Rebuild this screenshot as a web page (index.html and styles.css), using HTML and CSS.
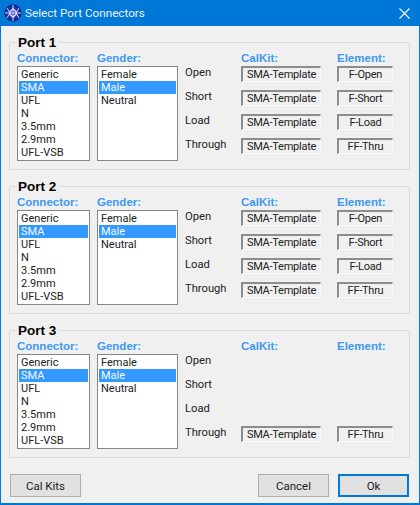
FILE: index.html
```html
<!DOCTYPE html>
<html lang="en">
<head>
<meta charset="utf-8">
<title>Select Port Connectors</title>
<link rel="stylesheet" href="styles.css">
</head>
<body>
<div class="window">
  <header class="titlebar">
    <svg class="app-icon" width="18" height="18" viewBox="0 0 18 18"><circle cx="9" cy="9" r="8" fill="#1c2fa8" stroke="#0c1a70"/><path d="M1 9h16M9 1v16M3 4l6 10 6-10M3 14l6-10 6 10" fill="none" stroke="#c9d4ff" stroke-width="1"/><circle cx="9" cy="9" r="3.5" fill="none" stroke="#e6ebff"/></svg>
    <span class="title">Select Port Connectors</span>
    <svg class="close" width="11" height="11" viewBox="0 0 11 11"><path d="M.5.5l10 10M10.5.5l-10 10" stroke="#fff" stroke-width="1.1" fill="none"/></svg>
  </header>
  <main class="content">
    <section class="group">
      <h2 class="legend">Port 1</h2>
      <div class="port">
        <div class="col-conn"><div class="hdr">Connector:</div>
          <ul class="list"><li>Generic</li><li class="sel">SMA</li><li>UFL</li><li>N</li><li>3.5mm</li><li>2.9mm</li><li>UFL-VSB</li></ul></div>
        <div class="col-gender"><div class="hdr">Gender:</div>
          <ul class="list"><li>Female</li><li class="sel">Male</li><li>Neutral</li></ul></div>
        <div class="col-table">
          <div class="hdr-row"><span class="hdr h-kit">CalKit:</span><span class="hdr">Element:</span></div>
          <div class="row"><span class="lbl">Open</span><span class="field kit">SMA-Template</span><span class="field el">F-Open</span></div>
          <div class="row"><span class="lbl">Short</span><span class="field kit">SMA-Template</span><span class="field el">F-Short</span></div>
          <div class="row"><span class="lbl">Load</span><span class="field kit">SMA-Template</span><span class="field el">F-Load</span></div>
          <div class="row"><span class="lbl">Through</span><span class="field kit">SMA-Template</span><span class="field el">FF-Thru</span></div>
        </div>
      </div>
    </section>
    <section class="group">
      <h2 class="legend">Port 2</h2>
      <div class="port">
        <div class="col-conn"><div class="hdr">Connector:</div>
          <ul class="list"><li>Generic</li><li class="sel">SMA</li><li>UFL</li><li>N</li><li>3.5mm</li><li>2.9mm</li><li>UFL-VSB</li></ul></div>
        <div class="col-gender"><div class="hdr">Gender:</div>
          <ul class="list"><li>Female</li><li class="sel">Male</li><li>Neutral</li></ul></div>
        <div class="col-table">
          <div class="hdr-row"><span class="hdr h-kit">CalKit:</span><span class="hdr">Element:</span></div>
          <div class="row"><span class="lbl">Open</span><span class="field kit">SMA-Template</span><span class="field el">F-Open</span></div>
          <div class="row"><span class="lbl">Short</span><span class="field kit">SMA-Template</span><span class="field el">F-Short</span></div>
          <div class="row"><span class="lbl">Load</span><span class="field kit">SMA-Template</span><span class="field el">F-Load</span></div>
          <div class="row"><span class="lbl">Through</span><span class="field kit">SMA-Template</span><span class="field el">FF-Thru</span></div>
        </div>
      </div>
    </section>
    <section class="group">
      <h2 class="legend">Port 3</h2>
      <div class="port">
        <div class="col-conn"><div class="hdr">Connector:</div>
          <ul class="list"><li>Generic</li><li class="sel">SMA</li><li>UFL</li><li>N</li><li>3.5mm</li><li>2.9mm</li><li>UFL-VSB</li></ul></div>
        <div class="col-gender"><div class="hdr">Gender:</div>
          <ul class="list"><li>Female</li><li class="sel">Male</li><li>Neutral</li></ul></div>
        <div class="col-table">
          <div class="hdr-row"><span class="hdr h-kit">CalKit:</span><span class="hdr">Element:</span></div>
          <div class="row"><span class="lbl">Open</span></div>
          <div class="row"><span class="lbl">Short</span></div>
          <div class="row"><span class="lbl">Load</span></div>
          <div class="row"><span class="lbl">Through</span><span class="field kit">SMA-Template</span><span class="field el">FF-Thru</span></div>
        </div>
      </div>
    </section>
    <footer class="buttons">
      <button class="btn">Cal Kits</button>
      <span class="spacer"></span>
      <button class="btn">Cancel</button>
      <button class="btn default">Ok</button>
    </footer>
  </main>
</div>
</body>
</html>
```
FILE: styles.css
```css
* { box-sizing: border-box; }
html, body { margin: 0; padding: 0; }
body { width: 420px; height: 505px; overflow: hidden; font-family: Roboto, "Liberation Sans", Arial, sans-serif; font-size: 11.2px; color: #222; }
.window { width: 420px; height: 505px; display: flex; flex-direction: column; background: #f0f0f0; border: 1px solid #0078d7; border-top: 0; border-width: 0 1px 2px 1px; }
.titlebar { height: 26px; margin: 0 -1px; background: #0078d7; color: #fff; display: flex; align-items: center; padding: 0 10px 0 4px; flex: none; }
.app-icon { flex: none; }
.title { margin-left: 3px; font-size: 11.7px; color: #e8f2fb; flex: 1; }
.close { flex: none; }
.content { flex: 1; display: flex; flex-direction: column; padding: 16px 9px 6px 8px; }
.group { position: relative; height: 128px; border: 1px solid #dcdcdc; border-radius: 2px; margin-bottom: 16px; padding: 8px 7px 0; }
.group:nth-of-type(3) { margin-bottom: 0; }
.legend { position: absolute; left: 7px; top: -8px; margin: 0; padding: 0 2px 0 1px; background: #f0f0f0; font-family: "Liberation Sans", Arial, sans-serif; font-size: 13.5px; line-height: 15px; font-weight: bold; color: #000; }
.port { display: flex; }
.hdr { color: #3f98f5; font-family: "Liberation Sans", Arial, sans-serif; font-weight: bold; font-size: 11.5px; line-height: 14px; height: 15px; white-space: nowrap; }
.col-conn { width: 73px; margin-right: 7px; }
.col-gender { width: 81px; margin-right: 7px; }
.list { list-style: none; margin: 0; padding: 1px; height: 95px; background: #fff; border: 1px solid #828790; font-size: 11px; }
.list li { height: 13px; line-height: 13px; padding-left: 2px; color: #222; white-space: nowrap; }
.list li.sel { background: #3399ff; color: #f4f9ff; }
.hdr-row { display: flex; padding-left: 56px; }
.h-kit { width: 96px; }
.row { display: flex; align-items: center; height: 16px; margin-bottom: 8px; }
.lbl { width: 56px; white-space: nowrap; line-height: 14px; position: relative; top: -1px; }
.field { display: block; height: 16px; line-height: 14px; font-size: 11px; letter-spacing: -.25px; border-style: solid; border-width: 2px 1px 1px 2px; border-color: #8c8c8c #fbfbfb #fbfbfb #8c8c8c; white-space: nowrap; text-align: center; }
.kit { width: 80px; margin-right: 16px; }
.el { width: 56px; }
.buttons { display: flex; margin-top: auto; margin-right: 1px; gap: 9px; padding-left: 1px; }
.spacer { flex: 1; }
.btn { width: 71px; height: 23px; font: 11.5px Roboto, "Liberation Sans", Arial, sans-serif; color: #222; background: #e1e1e1; border: 1px solid #adadad; padding: 0; }
.btn.default { border: 2px solid #0078d7; }
```
